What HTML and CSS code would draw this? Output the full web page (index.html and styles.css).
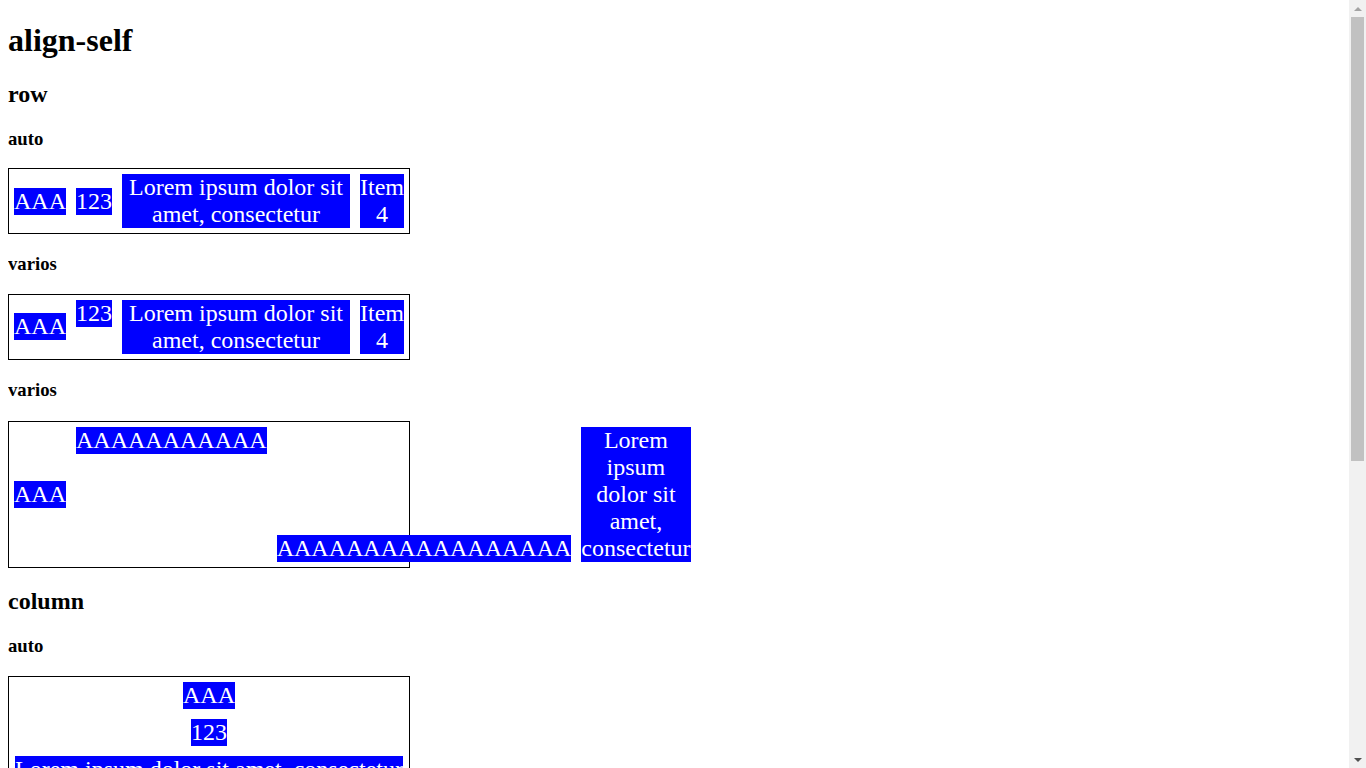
FILE: index.html
```html
<!DOCTYPE html>
<html lang="en">
<head>
    <meta charset="UTF-8">
    <meta name="viewport" content="width=device-width, initial-scale=1.0">
    <title>align-self</title>
    <link rel="stylesheet" href="styles.css">
</head>
<body>
    <h1>align-self</h1>

    <h2>row</h2>

    <h3>auto</h3>
    <div class="flex-box row">
        <div class="item">AAA</div>
        <div class="item">123</div>
        <div class="item">Lorem ipsum dolor sit amet, consectetur</div>
        <div class="item">Item 4</div>
    </div>

    <h3>varios</h3>
    <div class="flex-box row">
        <div class="item self-center">AAA</div>
        <div class="item self-start">123</div>
        <div class="item self-end">Lorem ipsum dolor sit amet, consectetur</div>
        <div class="item self-stretch">Item 4</div>
    </div>

    <h3>varios</h3>
    <div class="flex-box row overflow">
        <div class="item self-center">AAA</div>
        <div class="item self-start">AAAAAAAAAAA</div>
        <div class="item self-end">AAAAAAAAAAAAAAAAA</div>
        <div class="item self-stretch">Lorem ipsum dolor sit amet, consectetur</div>
    </div>

    <h2>column</h2>

    <h3>auto</h3>
    <div class="flex-box column">
        <div class="item">AAA</div>
        <div class="item">123</div>
        <div class="item">Lorem ipsum dolor sit amet, consectetur</div>
        <div class="item">Item 4</div>
    </div>

    <h3>varios</h3>
    <div class="flex-box column">
        <div class="item self-center">AAA</div>
        <div class="item self-start">123</div>
        <div class="item self-end">Lorem ipsum dolor sit amet, consectetur</div>
        <div class="item self-stretch">Item 4</div>
    </div>

    <h3>varios</h3>
    <div class="flex-box column">
        <div class="item self-center">AAA</div>
        <div class="item self-start">AAAAAAAAAAA</div>
        <div class="item self-end">AAAAAAAAAAAAAAAAA</div>
        <div class="item self-stretch">Lorem ipsum dolor sit amet, consectetur</div>
    </div>

    <div class="scrollbar" aria-hidden="true">
        <div class="scroll-button"><span class="arrow-up"></span></div>
        <div class="scroll-thumb"></div>
        <div class="scroll-track"></div>
        <div class="scroll-button"><span class="arrow-down"></span></div>
    </div>
</body>
</html>
```

FILE: styles.css
```css
body {
    font-family: 'Liberation Serif', 'Times New Roman', serif;
}
h1 {
    margin-top: 0.45em;
}
.flex-box {
    display: flex;
    align-items: center;
    width: 400px;
    border: 1px solid black;
}
.overflow {
    margin-top: 1.3em;
}
.row {
    flex-direction: row;
}
.column {
    flex-direction: column;
}
.item {
    margin: 5px;
    background-color: blue;
    color: white;
    font-size: 24px;
    text-align: center;
}
.self-start {
    align-self: flex-start;
}
.self-center {
    align-self: center;
}
.self-end {
    align-self: flex-end;
}
.self-stretch {
    align-self: stretch;
}

.scrollbar {
    position: fixed;
    top: 0;
    right: 0;
    width: 17px;
    height: 100vh;
    background-color: #f1f1f1;
    display: flex;
    flex-direction: column;
}
.scroll-button {
    height: 17px;
    display: flex;
    align-items: center;
    justify-content: center;
}
.arrow-up {
    width: 0;
    height: 0;
    border-left: 4px solid transparent;
    border-right: 4px solid transparent;
    border-bottom: 4px solid #a3a3a3;
}
.arrow-down {
    width: 0;
    height: 0;
    border-left: 4px solid transparent;
    border-right: 4px solid transparent;
    border-top: 4px solid #505050;
}
.scroll-thumb {
    height: 444px;
    margin: 0 2px;
    background-color: #c1c1c1;
}
.scroll-track {
    flex: 1;
}
```
